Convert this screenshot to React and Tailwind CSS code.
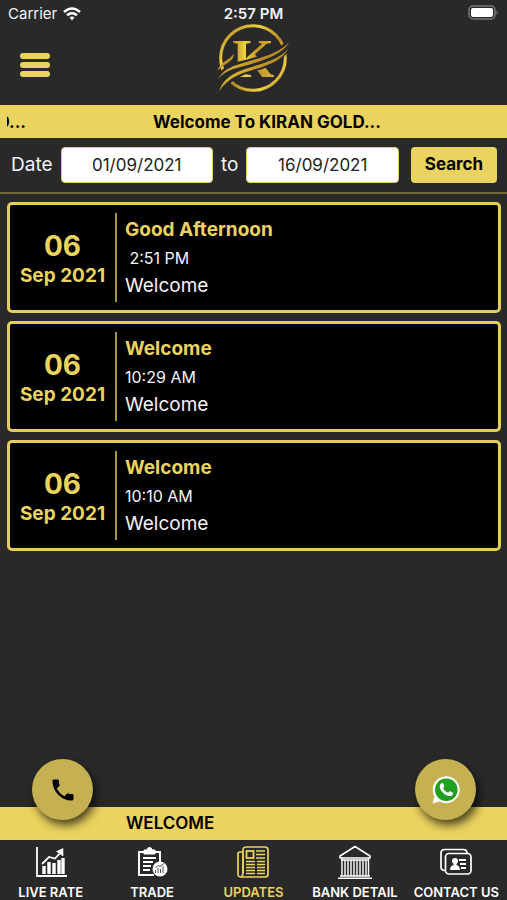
// src/App.jsx
import { useState } from "react";
import { MdPhone } from "react-icons/md";

const MARQUEE_TEXT = "Welcome To KIRAN GOLD...";

const updates = [
  { id: 1, day: "06", month: "Sep 2021", title: "Good Afternoon", time: "\u00a02:51 PM", message: "Welcome" },
  { id: 2, day: "06", month: "Sep 2021", title: "Welcome", time: "10:29 AM", message: "Welcome" },
  { id: 3, day: "06", month: "Sep 2021", title: "Welcome", time: "10:10 AM", message: "Welcome" },
];

const Logo = () => (
  <svg viewBox="15 12 240 216" className="w-20 h-[72px]" role="img" aria-label="Kiran Gold">
    <defs>
      <linearGradient id="gold" x1="0" y1="0" x2="1" y2="1">
        <stop offset="0" stopColor="#a87a1c" />
        <stop offset="0.3" stopColor="#f0d341" />
        <stop offset="0.55" stopColor="#b88a22" />
        <stop offset="0.8" stopColor="#efcf45" />
        <stop offset="1" stopColor="#9a6c18" />
      </linearGradient>
      <linearGradient id="goldLetter" x1="0" y1="0" x2="1" y2="0">
        <stop offset="0" stopColor="#b88a22" />
        <stop offset="0.3" stopColor="#f0d341" />
        <stop offset="0.6" stopColor="#c2952a" />
        <stop offset="1" stopColor="#d9b53a" />
      </linearGradient>
    </defs>
    <circle cx="132" cy="114" r="97" fill="none" stroke="url(#gold)" strokeWidth="9" />
    <text
      x="133"
      y="172"
      textAnchor="middle"
      fontFamily="Liberation Serif, serif"
      fontWeight="700"
      fontSize="162"
      fill="url(#goldLetter)"
    >
      K
    </text>
    {/* dark sweep that cuts the ring and the letter */}
    <path d="M18 178C45 128 90 126 130 114C172 102 212 88 242 54L246 74C228 126 184 140 140 153C102 164 66 178 30 226Z" fill="#292929" />
    <path d="M25 152C34 125 60 122 75 101C74 126 46 130 25 152Z" fill="url(#gold)" />
    <path d="M26 178C50 138 90 134 130 121C175 107 215 95 241 66C219 103 175 117 130 131C90 143 52 146 26 178Z" fill="url(#gold)" />
    <path d="M30 214C48 162 100 150 135 139C180 125 220 111 238 84C224 119 180 135 138 148C100 159 60 170 30 214Z" fill="url(#gold)" />
  </svg>
);

const LiveRateIcon = () => (
  <svg viewBox="0 0 32 32" className="w-8 h-8" fill="none" stroke="currentColor" strokeWidth="1.8">
    <path d="M2 1V30H32" />
    <path d="M7 18L14 11L20 12.500L26 6" strokeWidth="1.8" />
    <path d="M28 2.500L28 10L21.500 5.500Z" fill="currentColor" strokeWidth="0.6" />
    <path d="M9 28V20M14 28V16M19 28V17M24 28V14M28 28V12" strokeWidth="3.4" />
  </svg>
);

const TradeIcon = () => (
  <svg viewBox="0 0 32 32" className="w-8 h-8" fill="none" stroke="currentColor" strokeWidth="2">
    <path d="M18 29H3V6H8M18 6H24V16" />
    <path d="M8 4H11A2.500 2.500 0 0 1 16 4H19V8H8Z" fill="currentColor" strokeWidth="1" />
    <path d="M7 12H20M7 16H17M7 20H15M7 24H14" strokeWidth="1.800" />
    <circle cx="24" cy="23" r="7.500" fill="currentColor" stroke="none" />
    <path d="M19.500 27V24M22 27V22M24.500 27V23M27 27V20M19.500 22L22 19.500L24 20.500L28 17.500" stroke="#292929" strokeWidth="0.8" />
  </svg>
);

const UpdatesIcon = () => (
  <svg viewBox="0 0 32 32" className="w-8 h-8" fill="none" stroke="currentColor" strokeWidth="1.7">
    <path d="M6 27V4Q6 1 9 1H28Q31 1 31 4V28Q31 31 28 31H4Q1 31 1 28V8Q1 6 3 6H6" />
    <path d="M6 8V27Q6 30 4 31" />
    <rect x="9.500" y="5" width="7" height="7" strokeWidth="1.800" />
    <path d="M19 5H28M19 8.500H28M19 12H28M9 15.500H18M20 15.500H28M9 18.500H18M20 18.500H28M9 21.500H18M20 21.500H28M9 24.500H18M20 24.500H28M9 27.500H18M20 27.500H28" strokeWidth="1.300" />
  </svg>
);

const BankIcon = () => (
  <svg viewBox="0 0 34 34" className="w-[34px] h-[34px]" fill="none" stroke="currentColor" strokeWidth="1.6">
    <path d="M17 1.500L32 11V13H2V11Z" strokeLinejoin="round" />
    <path d="M4 13V31M7 15V31M10 15V31M13 15V31M16 15V31M19 15V31M22 15V31M25 15V31M28 15V31M30.500 13V31" strokeWidth="1.400" />
    <path d="M3 15H31M2 31H32M0 33.200H34" strokeWidth="1.500" />
  </svg>
);

const ContactIcon = () => (
  <svg viewBox="0 0 32 32" className="w-8 h-8" fill="none" stroke="currentColor" strokeWidth="1.700">
    <path d="M5 24.500Q1 24.500 1 21V7Q1 3.500 5 3.500H23Q27 3.500 27 7" />
    <rect x="5.500" y="7.500" width="25.500" height="20.500" rx="3.500" />
    <circle cx="15" cy="15" r="3" fill="currentColor" stroke="none" />
    <path d="M10 24Q10 20 13.500 19V17H16.500V19Q20 20 20 24Z" fill="currentColor" stroke="none" />
    <path d="M19 14H26M20 18H26M21 22H26" strokeWidth="1.800" />
  </svg>
);

const WhatsAppIcon = () => (
  <svg viewBox="0 0 28 28" className="w-7 h-7">
    <path d="M0.500 27.500L2.500 20.500A13.500 13.500 0 1 1 7.800 25.600Z" fill="#fff" />
    <circle cx="14.300" cy="13.700" r="11.300" fill="#1fa01f" />
    <path
      d="M9.200 7.400C9.800 6.900 10.900 6.900 11.200 7.600L12.300 10.100C12.500 10.700 11.400 11.700 11.200 12.200C12 14.200 14 16 16.200 16.700C16.800 16.300 17.500 15.100 18 15.200L20.900 16.600C21.300 17.100 20.900 18.600 20.200 19.200C18.800 20.300 17 20.300 14.900 19.400C11.700 18 9.300 15.600 8.100 12.500C7.300 10.300 7.800 8.500 9.200 7.400Z"
      fill="#fff"
    />
  </svg>
);

const tabs = [
  { id: "live", label: "LIVE RATE", icon: LiveRateIcon },
  { id: "trade", label: "TRADE", icon: TradeIcon },
  { id: "updates", label: "UPDATES", icon: UpdatesIcon },
  { id: "bank", label: "BANK DETAIL", icon: BankIcon },
  { id: "contact", label: "CONTACT US", icon: ContactIcon },
];

const StatusBar = () => (
  <div className="h-6 grid grid-cols-3 items-end px-2 text-[15px] leading-5 text-gray-100">
    <div className="flex items-center gap-1.5">
      <span>Carrier</span>
      <svg viewBox="0 0 18 14" className="w-[18px] h-3.5" fill="none" stroke="#fff" strokeWidth="2.600">
        <path d="M1 5Q9 -2 17 5M4 8.300Q9 4 14 8.300" />
        <path d="M6.500 10.500Q9 8.500 11.500 10.500L9 13.500Z" fill="#fff" stroke="none" />
      </svg>
    </div>
    <span className="text-center font-semibold">2:57 PM</span>
    <svg viewBox="0 0 31 15" className="w-[31px] h-[15px] justify-self-end self-end mb-1">
      <rect x="1" y="1" width="26" height="13" rx="4" fill="none" stroke="#77777a" strokeWidth="1.500" />
      <rect x="3" y="3" width="22" height="9" rx="2" fill="#fff" />
      <path d="M28.500 5Q31 7.500 28.500 10Z" fill="#77777a" />
    </svg>
  </div>
);

const UpdateCard = ({ update }) => (
  <article className="flex items-stretch bg-black border-[3px] border-[#e5cc5e] rounded-[5px] py-2">
    <div className="w-[105px] shrink-0 pt-1 flex flex-col items-center justify-center font-bold text-[#ebd35f]">
      <span className="text-[28px] leading-8">{update.day}</span>
      <span className="text-[19px] leading-7 whitespace-nowrap">{update.month}</span>
    </div>
    <div className="w-0.5 h-[89px] shrink-0 bg-[#a89441]" />
    <div className="flex flex-col justify-center pl-2">
      <h2 className="font-bold text-[19px] leading-7 text-[#ebd35f]">{update.title}</h2>
      <p className="text-[16px] leading-7 text-gray-100">{update.time}</p>
      <p className="text-[19px] leading-7 text-gray-100">{update.message}</p>
    </div>
  </article>
);

const App = () => {
  const [fromDate, setFromDate] = useState("01/09/2021");
  const [toDate, setToDate] = useState("16/09/2021");
  const [activeTab, setActiveTab] = useState("updates");

  return (
    <div className="min-h-screen flex flex-col bg-[#292929] font-['Inter',sans-serif]">
      <StatusBar />

      {/* Header */}
      <header className="h-[81px] grid grid-cols-[1fr_auto_1fr] items-center px-5">
        <button type="button" aria-label="Menu" className="w-[30px] flex flex-col gap-[3px]">
          <span className="h-1.5 w-full rounded-full bg-[#ebd35f]" />
          <span className="h-1.5 w-full rounded-full bg-[#ebd35f]" />
          <span className="h-1.5 w-full rounded-full bg-[#ebd35f]" />
        </button>
        <div className="self-start">
          <Logo />
        </div>
      </header>

      {/* Marquee */}
      <div className="h-[33px] flex items-center gap-[127px] px-[7px] overflow-hidden bg-[#ebd35f] text-black text-[17px] leading-6 font-bold whitespace-nowrap">
        <span aria-hidden="true" className="w-[19px] shrink-0 flex justify-end overflow-hidden">
          <span>{MARQUEE_TEXT}</span>
        </span>
        <span>{MARQUEE_TEXT}</span>
      </div>

      {/* Date filter */}
      <form
        onSubmit={(e) => e.preventDefault()}
        className="flex items-center h-14 pl-[11px] pr-2.5 border-b-2 border-[#74683c] text-[19px] text-gray-100"
      >
        <label htmlFor="from-date">Date</label>
        <input
          id="from-date"
          type="text"
          value={fromDate}
          onChange={(e) => setFromDate(e.target.value)}
          className="flex-1 min-w-0 h-9 mx-2 bg-white border border-[#e5cc5e] rounded-[4px] text-center text-[17px] text-[#222]"
        />
        <label htmlFor="to-date">to</label>
        <input
          id="to-date"
          type="text"
          value={toDate}
          onChange={(e) => setToDate(e.target.value)}
          className="flex-1 min-w-0 h-9 ml-2 mr-3 bg-white border border-[#e5cc5e] rounded-[4px] text-center text-[17px] text-[#222]"
        />
        <button type="submit" className="w-[86px] h-9 rounded-[4px] bg-[#ebd35f] text-black text-[17px] font-bold">
          Search
        </button>
      </form>

      {/* Updates list */}
      <main className="flex-1 flex flex-col gap-2 pt-2 pb-16 pl-[7px] pr-1.5">
        {updates.map((update) => (
          <UpdateCard key={update.id} update={update} />
        ))}
      </main>

      {/* Bottom bar */}
      <footer className="sticky bottom-0">
        <div className="relative h-[33px] flex items-center pl-[126px] bg-[#ebd35f] text-black text-[17px] font-semibold">
          WELCOME
          <a
            href="#call"
            aria-label="Call"
            className="absolute left-8 -top-12 w-[61px] h-[61px] rounded-full bg-[#c5b151] flex items-center justify-center shadow-[3px_5px_10px_rgba(0,0,0,0.7)]"
          >
            <MdPhone className="w-7 h-7 text-black" />
          </a>
          <a
            href="#whatsapp"
            aria-label="WhatsApp"
            className="absolute right-[31px] -top-12 w-[61px] h-[61px] rounded-full bg-[#c5b151] flex items-center justify-center shadow-[3px_5px_10px_rgba(0,0,0,0.7)]"
          >
            <WhatsAppIcon />
          </a>
        </div>
        <nav className="h-[60px] grid grid-cols-5 bg-[#292929]">
          {tabs.map(({ id, label, icon: Icon }) => (
            <button
              key={id}
              type="button"
              onClick={() => setActiveTab(id)}
              className={`flex flex-col items-center justify-end text-[13px] leading-4 font-semibold whitespace-nowrap ${
                activeTab === id ? "text-[#ebd35f]" : "text-white"
              }`}
            >
              <span className="h-9 mb-1 flex items-center justify-center">
                <Icon />
              </span>
              {label}
            </button>
          ))}
        </nav>
      </footer>
    </div>
  );
};

export default App;
